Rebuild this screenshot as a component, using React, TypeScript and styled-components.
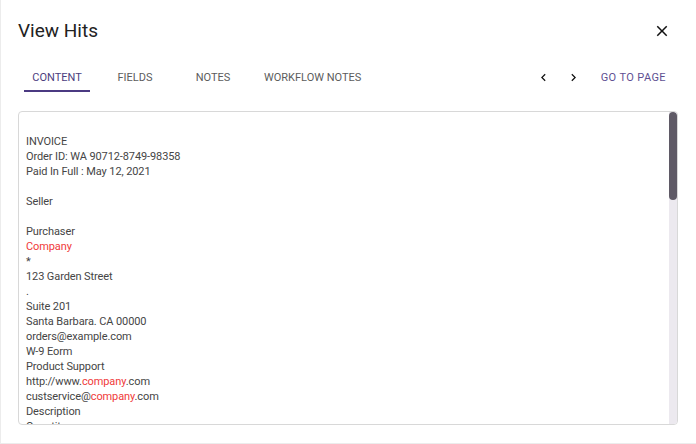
import React from 'react';
import styled, { createGlobalStyle } from 'styled-components';

const GlobalStyle = createGlobalStyle`
    html, body {
        margin:0;
        padding:0;
        background:#ffffff;
    }
    body {
        font-family:Roboto, "Liberation Sans", Arial, sans-serif;
        color:#333;
    }
`;

const TABS = ['Content', 'Fields', 'Notes', 'Workflow Notes'];

const LINES = [
    '',
    'INVOICE',
    'Order ID: WA 90712-8749-98358',
    'Paid In Full : May 12, 2021',
    '',
    'Seller',
    '',
    'Purchaser',
    'Company',
    '*',
    '123 Garden Street',
    '.',
    'Suite 201',
    'Santa Barbara. CA 00000',
    'orders@example.com',
    'W-9 Eorm',
    'Product Support',
    'http://www.company.com',
    'custservice@company.com',
    'Description',
    'Quantity',
    'Unit Price',
    'Amount',
    'Annual Subscription - Standard Plan',
    '1',
    '$1,200.00',
    '$1,200.00',
    'Additional User Licenses',
    '5',
    '$60.00',
    '$300.00',
    'Onboarding & Setup',
    '1',
    '$250.00',
    '$250.00',
    'Priority Support Add-on',
    '1',
    '$180.00',
    '$180.00',
    '',
    'Subtotal',
    '$1,930.00',
    'Discount',
    '-$100.00',
    'Tax (7.75%)',
    '$141.83',
    'Total',
    '$1,971.83',
    'Amount Paid',
    '$1,971.83',
    'Balance Due',
    '$0.00',
    '',
    'Payment Method',
    'Visa ending in 4421',
    'Transaction ID: 7F3K-22QX-91LM',
    '',
    'Notes',
    'Thank you for your business with Company.',
    'Questions about this invoice? Contact',
    'billing@company.com',
    '',
    'Terms',
    'Subscription renews automatically on May 12, 2022.',
    'Cancel anytime from your account settings.',
    'Refunds are available within 30 days of purchase.',
    '',
    'Company',
    '123 Garden Street',
    'Suite 201',
    'Santa Barbara. CA 00000',
    'Page 1 of 1',
    '',
];

// scroll position is at the top; thumb size follows visible / total height
const VISIBLE = 312;
const TOTAL = LINES.length * 15 + 7;
const THUMB = Math.max(20, Math.round((VISIBLE * VISIBLE) / TOTAL));

const highlight = (line:string) => {
    const parts = line.split(/(company)/i);
    return parts.map((p, i) =>
        /^company$/i.test(p) ? <Hit key={i}>{p}</Hit> : <React.Fragment key={i}>{p}</React.Fragment>
    );
};

const ChevronLeft = () => (
    <svg width="15" height="15" viewBox="0 0 24 24" fill="#111">
        <path d="M15.41 7.41L14 6l-6 6 6 6 1.41-1.41L10.83 12z" />
    </svg>
);

const ChevronRight = () => (
    <svg width="15" height="15" viewBox="0 0 24 24" fill="#111">
        <path d="M8.59 16.59L10 18l6-6-6-6-1.41 1.41L13.17 12z" />
    </svg>
);

const CloseIcon = () => (
    <svg width="18" height="18" viewBox="0 0 24 24" fill="#111">
        <path d="M19 6.41L17.59 5 12 10.59 6.41 5 5 6.41 10.59 12 5 17.59 6.41 19 12 13.41 17.59 19 19 17.59 13.41 12z" />
    </svg>
);

const App = () => {
    const active = 0;
    return (
        <>
            <GlobalStyle />
            <Dialog>
                <Header>
                    <Title>View Hits</Title>
                    <CloseButton aria-label="close">
                        <CloseIcon />
                    </CloseButton>
                </Header>
                <Toolbar>
                    <Tabs>
                        {TABS.map((t, i) => (
                            <Tab key={t} active={i === active}>{t}</Tab>
                        ))}
                    </Tabs>
                    <Pager>
                        <IconButton aria-label="previous"><ChevronLeft /></IconButton>
                        <IconButton aria-label="next"><ChevronRight /></IconButton>
                        <GoToPage>Go to page</GoToPage>
                    </Pager>
                </Toolbar>
                <ContentFrame>
                    <ContentScroll>
                        {LINES.map((l, i) => (
                            <Line key={i}>{l === '' ? '\u00a0' : highlight(l)}</Line>
                        ))}
                    </ContentScroll>
                    <ScrollTrack>
                        <ScrollThumb style={{ height: THUMB }} />
                    </ScrollTrack>
                </ContentFrame>
            </Dialog>
        </>
    );
};

const Dialog = styled.div`
    width:696px;
    height:444px;
    box-sizing:border-box;
    padding:19px 18px 19px 18px;
    display:flex;
    flex-direction:column;
    background:#fff;
    box-shadow:inset 1px 0 0 #ececec, inset 0 -1px 0 #ececec;
`;

const Header = styled.div`
    display:flex;
    align-items:center;
    justify-content:space-between;
    height:24px;
`;

const Title = styled.h2`
    margin:0;
    font-size:19px;
    font-weight:400;
    line-height:24px;
    color:#222;
`;

const CloseButton = styled.button`
    border:none;
    background:none;
    padding:0;
    width:30px;
    height:30px;
    display:flex;
    align-items:center;
    justify-content:center;
    margin-right:1px;
    cursor:pointer;
`;

const Toolbar = styled.div`
    display:flex;
    align-items:center;
    justify-content:space-between;
    margin-top:20px;
    height:28px;
`;

const Tabs = styled.div`
    display:flex;
    height:28px;
`;

const Tab = styled.div<{active:boolean}>`
    position:relative;
    min-width:78px;
    box-sizing:border-box;
    padding:1px 12px 0;
    text-align:center;
    font-size:11px;
    line-height:28px;
    text-transform:uppercase;
    color:${(props)=>props.active ? '#4b3d7e' : '#5c5c5c'};
    cursor:pointer;

    &::after{
        content:'';
        display:${(props)=>props.active ? 'block' : 'none'};
        position:absolute;
        left:6px;
        right:6px;
        bottom:-1px;
        height:2px;
        background:#4b3a82;
    }
`;

const Pager = styled.div`
    display:flex;
    align-items:center;
    height:28px;
    padding-top:1px;
`;

const IconButton = styled.button`
    border:none;
    background:none;
    padding:0;
    width:30px;
    height:28px;
    display:flex;
    align-items:center;
    justify-content:center;
    cursor:pointer;
`;

const GoToPage = styled.button`
    border:none;
    background:none;
    padding:0 12px;
    height:28px;
    font-family:Roboto, "Liberation Sans", Arial, sans-serif;
    font-size:11px;
    letter-spacing:0.4px;
    text-transform:uppercase;
    color:#5e4f92;
    cursor:pointer;
`;

const ContentFrame = styled.div`
    position:relative;
    margin-top:20px;
    height:314px;
    box-sizing:border-box;
    border:1px solid #d8d8d8;
    border-radius:4px;
    overflow:hidden;
`;

const ContentScroll = styled.div`
    height:100%;
    box-sizing:border-box;
    padding:7px 7px 0 7px;
    overflow:hidden;
    font-size:11px;
    letter-spacing:-0.1px;
    line-height:15px;
    color:#454545;
`;

const ScrollTrack = styled.div`
    position:absolute;
    top:0;
    right:0;
    bottom:0;
    width:8px;
    background:#ece9ef;
`;

const ScrollThumb = styled.div`
    width:8px;
    background:#5f5a66;
    border-radius:4px;
`;

const Line = styled.div`
    white-space:pre;
`;

const Hit = styled.span`
    color:#f03a3a;
`;

export default App;
